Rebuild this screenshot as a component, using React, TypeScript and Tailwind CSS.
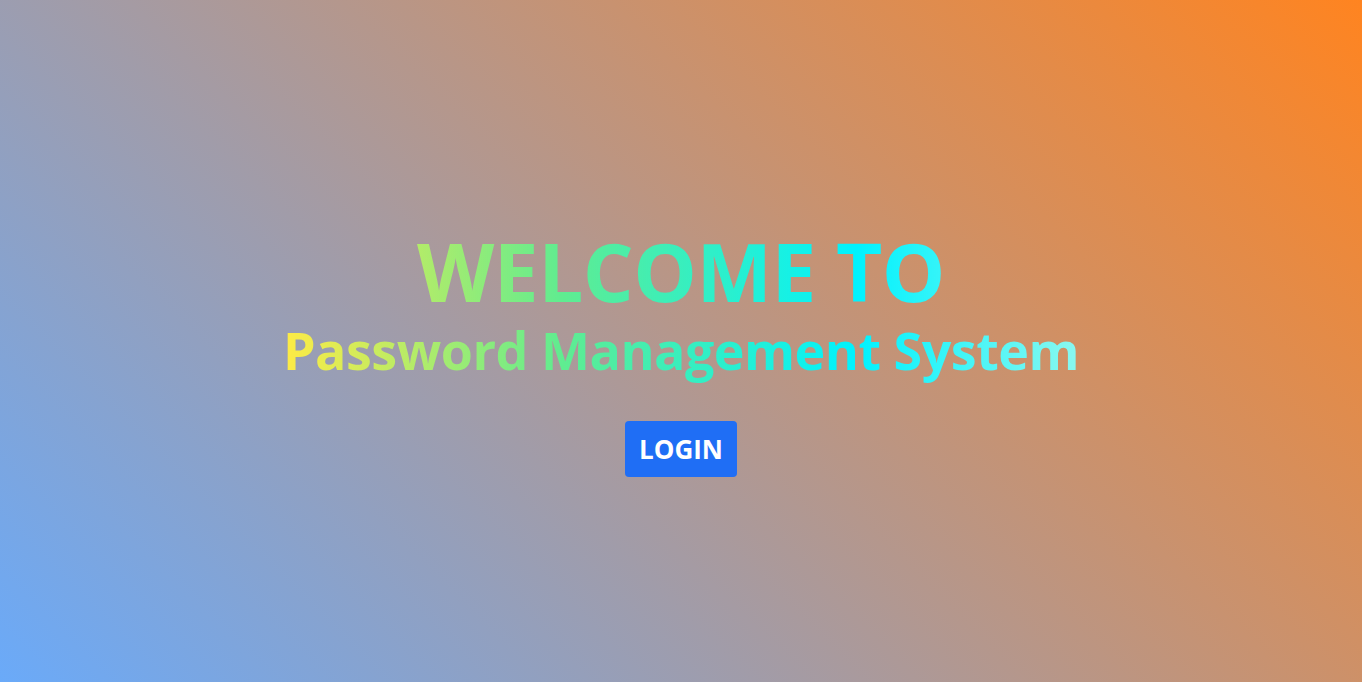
export default function App() {
  return (
    <div
      className="min-h-screen w-full flex items-center justify-center bg-[linear-gradient(45deg,#6aaaf9,#ff8420)]"
      style={{ fontFamily: '"Open Sans", "Noto Sans", sans-serif' }}
    >
      <div className="flex flex-col items-center pt-[20px]">
        <h1 className="text-center font-bold bg-[linear-gradient(90deg,#ffeb45_0%,#60ec90_35%,#00f2fe_72%,#8af8f0_100%)] bg-clip-text text-transparent">
          <span className="block text-[80px] leading-[92px] tracking-[-0.5px]">WELCOME TO</span>
          <span className="block text-[52px] leading-[66px] tracking-[-0.5px]">Password Management System</span>
        </h1>
        <button className="mt-[38px] h-[56px] w-[112px] rounded-[4px] bg-[#1f6ef5] text-white text-[26px] font-bold">
          LOGIN
        </button>
      </div>
    </div>
  );
}
